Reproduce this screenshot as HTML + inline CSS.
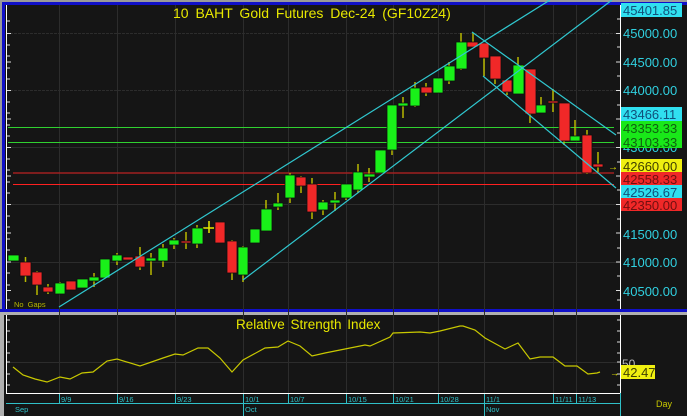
<!DOCTYPE html>
<html><head><meta charset="utf-8"><style>
html,body{margin:0;padding:0;background:#151515;}
svg{display:block}
text{font-family:"Liberation Sans",sans-serif;}
</style></head><body>
<svg width="687" height="416" viewBox="0 0 687 416" xmlns="http://www.w3.org/2000/svg">
<rect width="687" height="416" fill="#151515"/>
<rect x="0" y="0" width="687" height="2" fill="#9a9a9a"/>
<rect x="0" y="2" width="687" height="3" fill="#1010c8"/>
<rect x="0" y="2" width="2" height="312" fill="#9a9a9a"/>
<rect x="2" y="2" width="3" height="310" fill="#1010c8"/>
<rect x="0" y="309" width="687" height="3" fill="#1010c8"/>
<rect x="0" y="312" width="687" height="3" fill="#b0b0b0"/>
<rect x="0" y="315" width="4" height="101" fill="#b0b0b0"/>
<g stroke="#2c2c2c" stroke-width="1">
<line x1="59.5" y1="5" x2="59.5" y2="393"/><line x1="117.5" y1="5" x2="117.5" y2="393"/>
<line x1="175.5" y1="5" x2="175.5" y2="393"/><line x1="243.5" y1="5" x2="243.5" y2="393"/>
<line x1="288.5" y1="5" x2="288.5" y2="393"/><line x1="346.5" y1="5" x2="346.5" y2="393"/>
<line x1="393.5" y1="5" x2="393.5" y2="393"/><line x1="438.5" y1="5" x2="438.5" y2="393"/>
<line x1="484.5" y1="5" x2="484.5" y2="393"/><line x1="553.5" y1="5" x2="553.5" y2="393"/>
<line x1="576.5" y1="5" x2="576.5" y2="393"/>
<line x1="6" y1="33.5" x2="620" y2="33.5" stroke-dasharray="3,1"/>
<line x1="6" y1="90.5" x2="620" y2="90.5" stroke-dasharray="3,1"/>
<line x1="6" y1="147.5" x2="620" y2="147.5"/>
<line x1="6" y1="204.5" x2="620" y2="204.5"/>
<line x1="6" y1="262.5" x2="620" y2="262.5"/>
<line x1="6" y1="362.5" x2="620" y2="362.5"/>
</g>
<line x1="6.5" y1="5" x2="6.5" y2="309" stroke="#fff"/>
<line x1="620.5" y1="5" x2="620.5" y2="309" stroke="#fff"/>
<line x1="620.5" y1="315" x2="620.5" y2="393" stroke="#fff"/>
<g stroke="#ddd">
<path d="M616 33.5h4M616 62h4M616 90.5h4M616 119h4M616 147.5h4M616 176h4M616 204.5h4M616 233h4M616 262h4M616 290.5h4M617 19h3M617 47h3M617 76h3M617 105h3M617 133h3M617 162h3M617 190h3M617 219h3M617 248h3M617 276h3M617 300h3"/>
<path d="M7 21h3M7 33.5h4M7 45h3M7 56h3M7 62h4M7 68h3M7 79h3M7 90.5h4M7 102h3M7 113h3M7 119h4M7 125h3M7 136h3M7 147.5h4M7 159h3M7 170h3M7 176h4M7 182h3M7 193h3M7 204.5h4M7 216h3M7 227h3M7 233h4M7 239h3M7 250h3M7 262h4M7 273h3M7 285h3M7 290.5h4M7 300h3"/>
<path d="M617 320h3M617 331h3M617 342h3M617 353h3M617 362h3M617 374h3M617 385h3M7 320h3M7 331h3M7 342h3M7 353h3M7 362h3M7 374h3M7 385h3"/>
</g>
<line x1="6.5" y1="315" x2="6.5" y2="393" stroke="#fff"/>
<line x1="8" y1="127.5" x2="614" y2="127.5" stroke="#30d030"/>
<line x1="8" y1="142.5" x2="614" y2="142.5" stroke="#30d030"/>
<line x1="13" y1="173" x2="614" y2="173" stroke="#a02020" stroke-width="1.5"/>
<line x1="13" y1="184.5" x2="614" y2="184.5" stroke="#ff2020"/>
<g stroke="#b8b800" stroke-width="1.5">
<path d="M25.5 257v25M37 271v24M48 284v10M60 282v12M94 273v14M117 253v12M140 247v23M151 253v22M163 244v23M174 238v11M186 232v17M197 225v23M232 240v40M243 246v36M266 200v31M278 193v17M290 173v30M301 176v17M312 178v41M323 200v15M335 192v19M346 184v16M358 164v29M369 168v14M392 105v50M403 97v21M415 82v25M426 83v13M449 62v22M461 33v37M473 33v14M484 43v33M495 56v28M507 80v15M518 57v37M530 69v54M541 97v16M553 89v23M564 103v42M575 120v21M587 130v44M598 152v20"/>
<path d="M203 228h11" stroke="#e8e800"/>
<path d="M209 221v12" stroke="#e8e800"/>
</g>
<g stroke="#101010" stroke-width="0.8">
<g fill="#19f019">
<rect x="8" y="255" width="11" height="6"/><rect x="55" y="283" width="10" height="11"/><rect x="77" y="279" width="11" height="9"/><rect x="89" y="277" width="10" height="4"/><rect x="100" y="259" width="10" height="19"/><rect x="112" y="255" width="10" height="6"/><rect x="146" y="258" width="10" height="3"/><rect x="158" y="248" width="10" height="13"/><rect x="169" y="240" width="10" height="5"/><rect x="192" y="228" width="11" height="16"/><rect x="238" y="247" width="10" height="28"/><rect x="250" y="229" width="10" height="14"/><rect x="261" y="209" width="11" height="22"/><rect x="273" y="203" width="10" height="4"/><rect x="285" y="175" width="10" height="23"/><rect x="318" y="202" width="10" height="8"/><rect x="330" y="200" width="10" height="3"/><rect x="341" y="184" width="11" height="14"/><rect x="353" y="172" width="10" height="18"/><rect x="364" y="174" width="11" height="3"/><rect x="375" y="150" width="11" height="23"/><rect x="387" y="105" width="10" height="45"/><rect x="398" y="103" width="10" height="3"/><rect x="410" y="88" width="10" height="18"/><rect x="433" y="78" width="10" height="15"/><rect x="444" y="66" width="11" height="15"/><rect x="456" y="42" width="11" height="27"/><rect x="513" y="65" width="11" height="29"/><rect x="536" y="105" width="10" height="8"/><rect x="570" y="136" width="10" height="5"/>
</g>
<g fill="#f02828">
<rect x="20" y="262" width="11" height="14"/><rect x="32" y="272" width="10" height="13"/><rect x="43" y="287" width="10" height="5"/><rect x="66" y="281" width="10" height="9"/><rect x="123" y="257" width="10" height="3"/><rect x="135" y="256" width="10" height="11"/><rect x="181" y="241" width="10" height="2"/><rect x="215" y="222" width="10" height="21"/><rect x="227" y="241" width="10" height="32"/><rect x="296" y="177" width="10" height="9"/><rect x="307" y="184" width="10" height="28"/><rect x="421" y="87" width="11" height="6"/><rect x="467" y="42" width="11" height="5"/><rect x="479" y="43" width="10" height="15"/><rect x="490" y="56" width="11" height="23"/><rect x="502" y="80" width="10" height="12"/><rect x="525" y="69" width="11" height="45"/><rect x="548" y="101" width="10" height="2"/><rect x="559" y="103" width="11" height="38"/><rect x="582" y="135" width="10" height="38"/><rect x="593" y="164" width="10" height="3"/>
</g>
</g>
<g stroke="#30c8d0" stroke-width="1.2" fill="none">
<line x1="59" y1="307" x2="550" y2="0"/>
<line x1="243" y1="280" x2="612" y2="0"/>
<line x1="472" y1="32" x2="616" y2="135"/>
<line x1="483" y1="76" x2="616" y2="188"/>
</g>
<text x="608" y="170" fill="#e8e800" font-size="10">→</text>
<text x="173" y="18" fill="#e8e800" font-size="14" word-spacing="3">10 BAHT Gold Futures Dec-24 (GF10Z24)</text>
<text x="14" y="307" fill="#b8b800" font-size="7.5" word-spacing="2">No Gaps</text>
<g font-size="13">
<rect x="621" y="3" width="61" height="14" fill="#30e0f0"/><text x="623" y="15" fill="#10507a">45401.85</text>
<text x="623" y="38" fill="#30d0e0">45000.00</text>
<text x="623" y="67" fill="#30d0e0">44500.00</text>
<text x="623" y="95" fill="#30d0e0">44000.00</text>
<text x="623" y="152" fill="#30d0e0">43000.00</text>
<rect x="621" y="107" width="61" height="14" fill="#30e0f0"/><text x="623" y="119" fill="#10507a">43466.11</text>
<rect x="621" y="121" width="61" height="14" fill="#19e819"/><text x="623" y="133" fill="#106010">43353.33</text>
<rect x="621" y="135" width="61" height="13" fill="#19e819"/><text x="623" y="147" fill="#106010">43103.33</text>
<rect x="621" y="159" width="61" height="13" fill="#f0f010"/><text x="623" y="171" fill="#404000">42660.00</text>
<rect x="621" y="172" width="61" height="13" fill="#f02828"/><text x="623" y="184" fill="#701010">42558.33</text>
<rect x="621" y="185" width="61" height="13" fill="#30e0f0"/><text x="623" y="197" fill="#10507a">42526.67</text>
<rect x="621" y="198" width="61" height="13" fill="#f02828"/><text x="623" y="210" fill="#701010">42350.00</text>
<text x="623" y="239" fill="#30d0e0">41500.00</text>
<text x="623" y="267" fill="#30d0e0">41000.00</text>
<text x="623" y="296" fill="#30d0e0">40500.00</text>
<text x="622" y="368" fill="#bbbbbb" font-size="12">50</text>
<rect x="621" y="365" width="34" height="14" fill="#f0f010"/><text x="623" y="377" fill="#404000">42.47</text>
</g>
<text x="236" y="329" fill="#e8e800" font-size="13.5" word-spacing="2">Relative Strength Index</text>
<polyline fill="none" stroke="#c8c800" stroke-width="1.2" points="13,367 23,375 35,379 47,382 60,377 70,379 82,373 93,372 107,361 117,359 140,366 163,358 175,354 183,355 198,348 208,348 220,358 232,372 243,360 265,348 278,347 288,341 300,346 312,356 325,353 340,350 365,345 370,346 390,337 393,333 420,332 430,333 440,331 460,326 463,326 475,330 485,338 505,349 518,343 530,359 540,357 553,357 565,366 577,366 588,374 597,373 600,372"/>
<text x="610" y="376" fill="#e8e800" font-size="9">→</text>
<line x1="6" y1="393.5" x2="620" y2="393.5" stroke="#fff"/>
<line x1="6" y1="403.5" x2="620" y2="403.5" stroke="#30c0c8"/>
<g stroke="#30c0c8">
<path d="M59.5 394v10M117.5 394v10M175.5 394v10M243.5 394v22M288.5 394v10M346.5 394v10M393.5 394v10M438.5 394v10M484.5 394v22M553.5 394v10M576.5 394v10M620.5 393v23"/>
</g>
<g fill="#30c0c8" font-size="7.5">
<text x="61" y="402">9/9</text><text x="119" y="402">9/16</text><text x="177" y="402">9/23</text><text x="245" y="402">10/1</text><text x="290" y="402">10/7</text><text x="348" y="402">10/15</text><text x="395" y="402">10/21</text><text x="440" y="402">10/28</text><text x="486" y="402">11/1</text><text x="555" y="402">11/11</text><text x="578" y="402">11/13</text>
<text x="15" y="412">Sep</text><text x="245" y="412">Oct</text><text x="486" y="412">Nov</text>
</g>
<text x="656" y="407" fill="#c8c800" font-size="9">Day</text>
</svg>
</body></html>
